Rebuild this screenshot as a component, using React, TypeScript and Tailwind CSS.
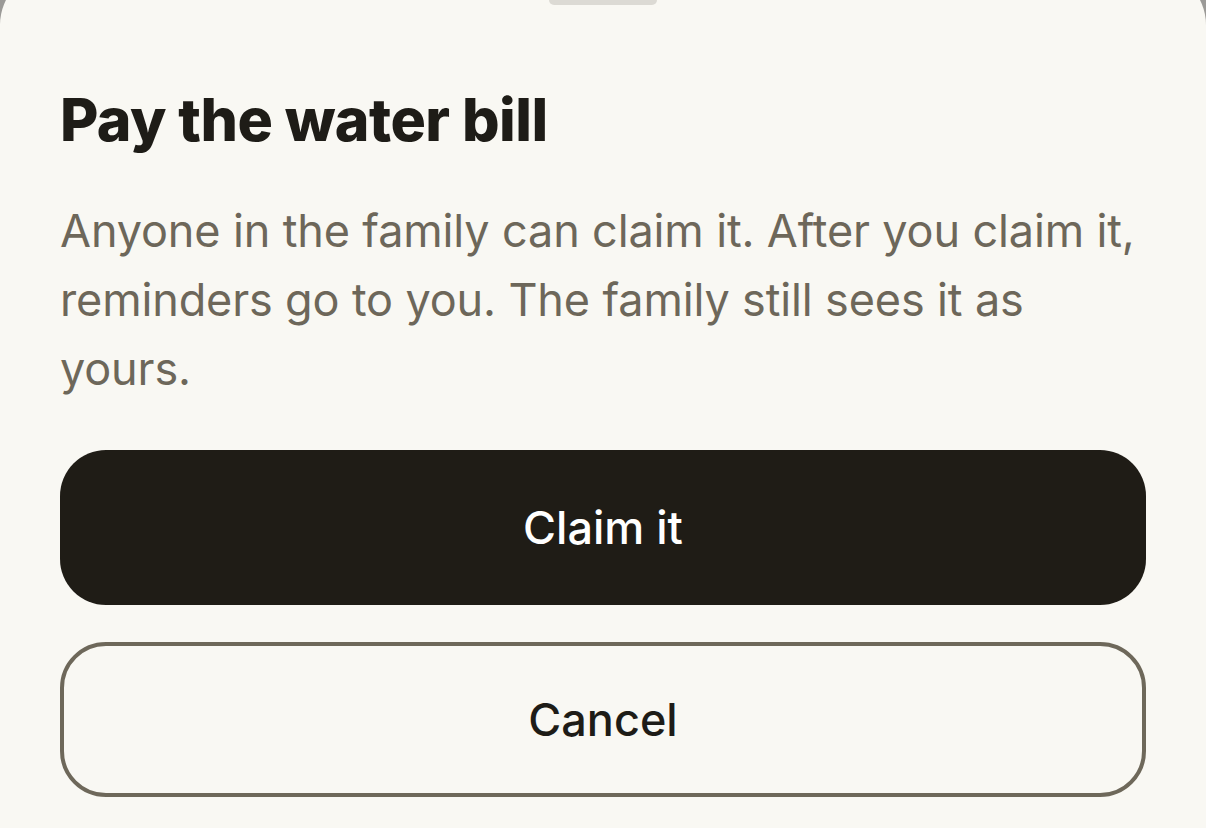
export default function App() {
  return (
    <div className="h-[828px] w-[1206px] overflow-hidden bg-[#9b9a97]" style={{ fontFamily: "Inter, 'Noto Sans', sans-serif" }}>
      <div className="-mt-[30px] flex h-[858px] flex-col rounded-t-[55px] bg-[#f9f8f3] px-[60px]">
        <div className="mx-auto mt-[23px] h-[12px] w-[108px] shrink-0 rounded-[5px] bg-[#dcdad4]" />
        <h2 className="mt-[80px] text-[59px] font-extrabold leading-[70px] tracking-[-0.009em] text-[#1e1c17]">
          Pay the water bill
        </h2>
        <p className="mt-[41px] text-[45px] leading-[69px] tracking-[-0.003em] text-[#6d675a]">
          Anyone in the family can claim it. After you claim it, reminders go to you. The family still sees it as yours.
        </p>
        <button className="mt-[47px] flex h-[155px] w-full shrink-0 items-center justify-center rounded-[46px] bg-[#1f1c16] text-[45px] font-medium text-white">
          Claim it
        </button>
        <button className="mt-[37px] flex h-[155px] w-full shrink-0 items-center justify-center rounded-[46px] border-[4px] border-[#6e685a] text-[45px] font-medium text-[#1e1c17]">
          Cancel
        </button>
      </div>
    </div>
  );
}
